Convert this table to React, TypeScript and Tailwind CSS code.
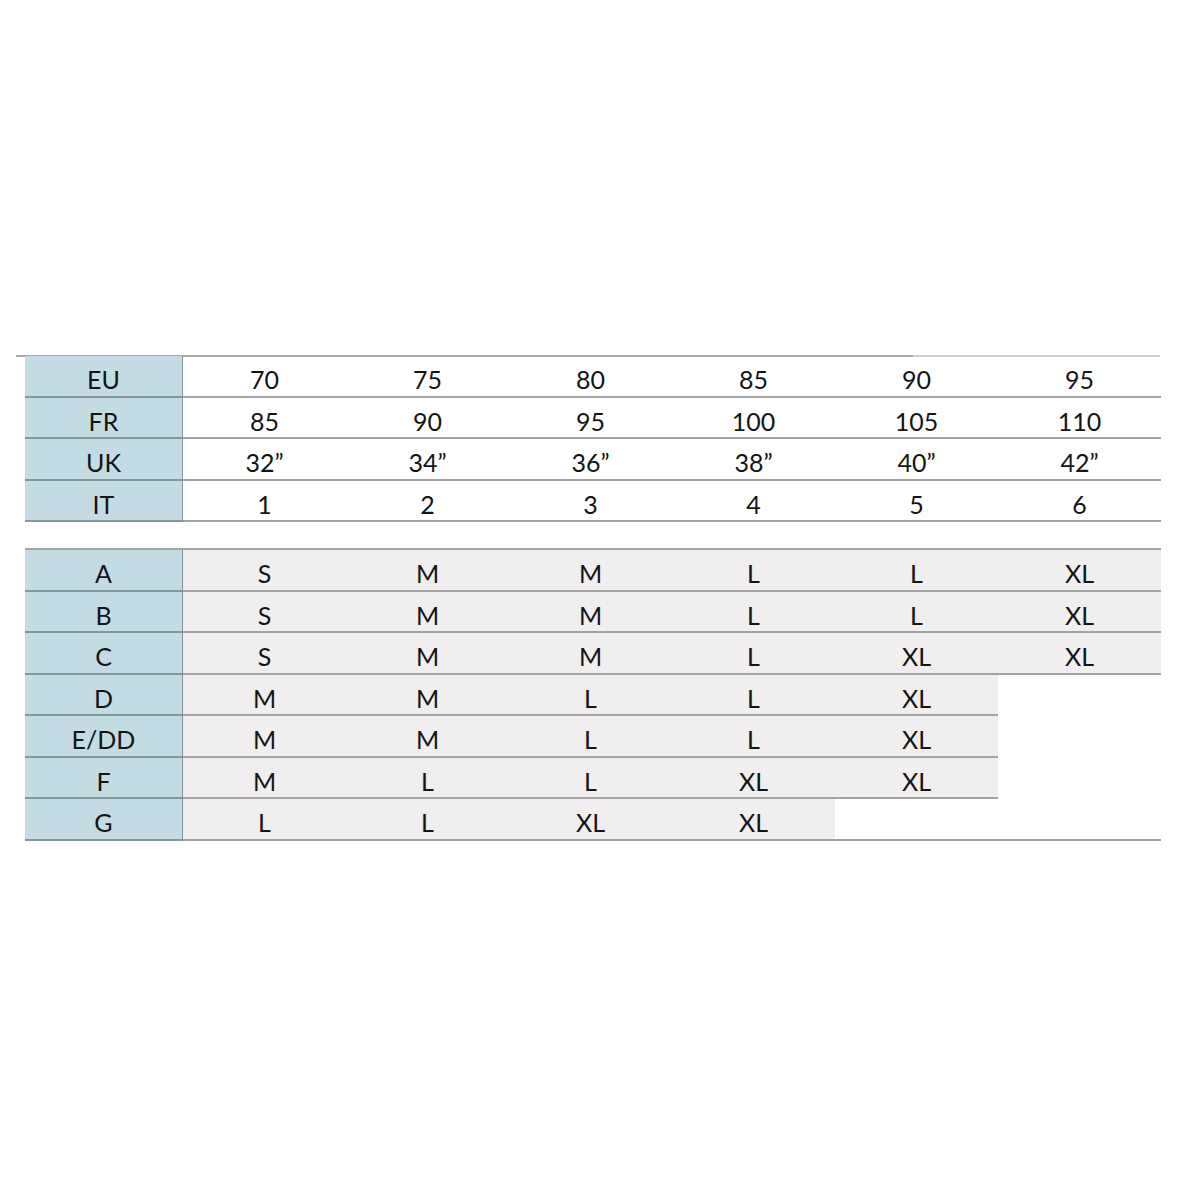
import React from "react";

const top: [string, string[]][] = [
  ["EU", ["70", "75", "80", "85", "90", "95"]],
  ["FR", ["85", "90", "95", "100", "105", "110"]],
  ["UK", ["32”", "34”", "36”", "38”", "40”", "42”"]],
  ["IT", ["1", "2", "3", "4", "5", "6"]],
];

const bottom: [string, string[]][] = [
  ["A", ["S", "M", "M", "L", "L", "XL"]],
  ["B", ["S", "M", "M", "L", "L", "XL"]],
  ["C", ["S", "M", "M", "L", "XL", "XL"]],
  ["D", ["M", "M", "L", "L", "XL", ""]],
  ["E/DD", ["M", "M", "L", "L", "XL", ""]],
  ["F", ["M", "L", "L", "XL", "XL", ""]],
  ["G", ["L", "L", "XL", "XL", "", ""]],
];

function Row({ label, vals, gray, last }: { label: string; vals: string[]; gray: boolean; last: boolean }) {
  return (
    <div className="flex h-[41.5px]">
      <div className="w-[158px] h-full bg-[#c3dce3] border-b-2 border-[#83979d] border-r border-r-[#7f9298] flex items-center justify-center pt-[8px]">
        {label}
      </div>
      {vals.map((v, i) => {
        const empty = gray && v === "";
        const cls = empty
          ? last
            ? "border-b-2 border-[#a3a3a3]"
            : ""
          : gray
          ? "bg-[#f0eeef] border-b-2 border-[#a3a3a3]"
          : "border-b-2 border-[#a3a3a3]";
        return (
          <div key={i} className={"w-[163px] h-full flex items-center justify-center pt-[8px] " + cls}>
            {v}
          </div>
        );
      })}
    </div>
  );
}

export default function App() {
  return (
    <div
      className="w-[1200px] h-[1200px] bg-white text-[#141414] text-[25px] leading-none"
      style={{ fontFamily: "Lato, 'Open Sans', sans-serif" }}
    >
      <div className="pt-[355px]">
        <div className="ml-[16px] w-[1144px] h-[2px] flex">
          <div className="w-[897px] bg-[#a8a8a8]" />
          <div className="flex-1 bg-[#d0d0d0]" />
        </div>
        <div className="ml-[25px] -mt-[1px]">
          {top.map(([l, v], i) => (
            <Row key={l} label={l} vals={v} gray={false} last={i === top.length - 1} />
          ))}
        </div>
        <div className="ml-[25px] mt-[26px] border-t-2 border-[#a3a3a3] w-[1136px]">
          {bottom.map(([l, v], i) => (
            <Row key={l} label={l} vals={v} gray={true} last={i === bottom.length - 1} />
          ))}
        </div>
      </div>
    </div>
  );
}
